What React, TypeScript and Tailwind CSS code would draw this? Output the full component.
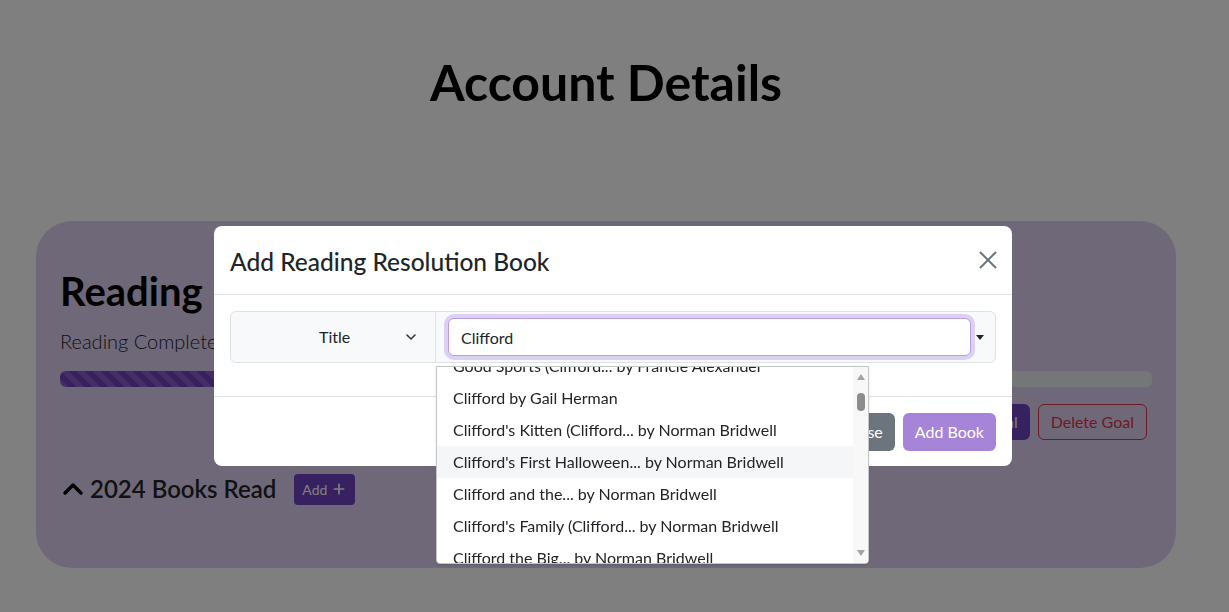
import { ChevronDown, ChevronUp, Plus } from "lucide-react";

const books = [
  "Clifford by Gail Herman",
  "Clifford's Kitten (Clifford... by Norman Bridwell",
  "Clifford's First Halloween... by Norman Bridwell",
  "Clifford and the... by Norman Bridwell",
  "Clifford's Family (Clifford... by Norman Bridwell",
  "Clifford the Big... by Norman Bridwell",
];

function ReadingCard() {
  return (
    <div className="ml-[36px] mt-[107px] w-[1140px] rounded-[36px] bg-[#dcd1f1] px-6 pb-[63px] pt-[46px]">
      <h2 className="text-[40px] font-bold leading-[48px] text-black">Reading Resolution 2024</h2>
      <p className="mt-3 text-[20px] font-light leading-[28px] text-[#212529]">Reading Completed: 4 / 24 books</p>
      <div className="mt-4 h-4 w-full overflow-hidden rounded-md bg-[#e9ecef]">
        <div className="h-full w-[17%] bg-[#6f42c1] bg-[linear-gradient(45deg,rgba(255,255,255,.15)_25%,transparent_25%,transparent_50%,rgba(255,255,255,.15)_50%,rgba(255,255,255,.15)_75%,transparent_75%,transparent)] bg-size-[16px_16px]" />
      </div>
      <div className="mt-[17px] flex justify-end gap-2 pr-[5px]">
        <button className="h-9 rounded-md bg-[#6f42c1] px-3 text-[16px] text-white">Edit Goal</button>
        <button className="h-9 rounded-md border border-[#dc3545] px-3 text-[16px] text-[#dc3545]">Delete Goal</button>
      </div>
      <div className="mt-[33px] flex items-center">
        <ChevronUp className="-ml-[3px] mr-[1px] h-8 w-8 text-black" strokeWidth={2.6} />
        <h3 className="text-[24px] font-semibold leading-8 text-[#212529]">2024 Books Read</h3>
        <button className="ml-[18px] flex h-[31px] items-center gap-1 rounded bg-[#6f42c1] px-2 text-[14px] text-white">
          Add <Plus className="h-4 w-4" strokeWidth={2.5} />
        </button>
      </div>
    </div>
  );
}

function Suggestions() {
  return (
    <div className="absolute left-0 top-[54px] z-10 flex h-[198px] w-[433px] overflow-hidden rounded-b border border-[#c6c6c6] bg-white shadow-sm">
      <div className="flex-1 overflow-hidden">
        <div className="-mt-[17px] flex h-8 items-center px-4 text-[16px] text-[#212529]">
          Good Sports (Clifford... by Francie Alexander
        </div>
        {books.map((b, i) => (
          <div
            key={b}
            className={
              i === 2
                ? "flex h-8 items-center bg-[#f5f6f8] px-4 text-[16px] text-[#212529]"
                : "flex h-8 items-center px-4 text-[16px] text-[#212529]"
            }
          >
            {b}
          </div>
        ))}
      </div>
      <div className="flex w-[15px] flex-col items-center bg-[#f8f8f8] py-1">
        <svg width="10" height="8" viewBox="0 0 10 8" className="mt-[2px]">
          <path d="M5 1 L9 7 L1 7 Z" fill="#a3a3a3" />
        </svg>
        <div className="mt-[12px] h-[18px] w-2 rounded-full bg-[#8c8c8c]" />
        <div className="flex-1" />
        <svg width="10" height="8" viewBox="0 0 10 8" className="mb-[2px]">
          <path d="M1 1 L9 1 L5 7 Z" fill="#a3a3a3" />
        </svg>
      </div>
    </div>
  );
}

function Modal() {
  return (
    <div className="fixed inset-0 bg-black/50">
      <div className="ml-[214px] mt-[226px] w-[798px] rounded-lg bg-white text-[#212529]">
        <div className="flex h-[69px] items-center justify-between border-b border-[#dee2e6] px-4">
          <h5 className="mt-[3px] text-[24.5px] font-medium leading-8">Add Reading Resolution Book</h5>
          <button className="-mr-[1px]">
            <svg width="18" height="18" viewBox="0 0 18 18">
              <path d="M1 1 L17 17 M17 1 L1 17" stroke="#6c757d" strokeWidth="2" />
            </svg>
          </button>
        </div>
        <div className="px-4 pb-[33px] pt-4">
          <div className="flex h-[52px] rounded-md border border-[#dee2e6] bg-[#f8f9fa]">
            <div className="flex w-[205px] items-center border-r border-[#dee2e6] pl-[88px] pr-4">
              <span className="flex-1 text-[16px]">Title</span>
              <ChevronDown className="h-4 w-4 text-[#343a40]" strokeWidth={2.4} />
            </div>
            <div className="relative flex flex-1 items-center pl-3 pr-[11px]">
              <input
                readOnly
                value="Clifford"
                className="h-[38px] flex-1 rounded-md border border-[#b79ee3] bg-white px-3 text-[16px] text-[#212529] shadow-[0_0_0_4px_#dcd0f3] outline-none"
              />
              <svg width="8" height="5" viewBox="0 0 8 5" className="ml-[5px]">
                <path d="M0 0 L8 0 L4 5 Z" fill="#212529" />
              </svg>
              <Suggestions />
            </div>
          </div>
        </div>
        <div className="flex h-[70px] items-center justify-end gap-2 border-t border-[#dee2e6] px-4">
          <button className="h-[38px] rounded-md bg-[#6c757d] px-3 text-[16px] text-white">Close</button>
          <button className="h-[38px] rounded-md bg-[#a684d8] px-3 text-[16px] text-white">Add Book</button>
        </div>
      </div>
    </div>
  );
}

export default function App() {
  return (
    <div className="min-h-screen bg-white pt-[50px] font-['Lato',sans-serif]">
      <h1 className="pr-[17px] text-center text-[50px] font-bold leading-[64px] text-black">Account Details</h1>
      <ReadingCard />
      <Modal />
    </div>
  );
}
